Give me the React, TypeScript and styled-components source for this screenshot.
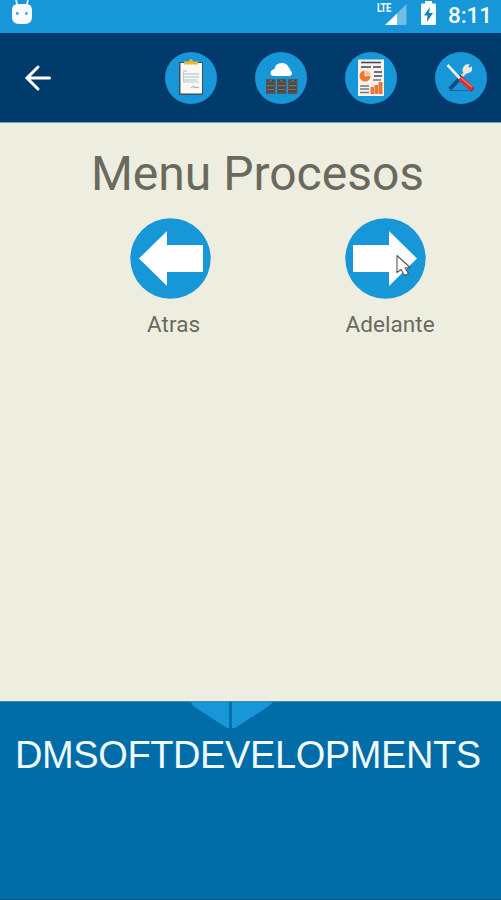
import React from "react";
import styled, { createGlobalStyle } from "styled-components";

const GlobalStyle = createGlobalStyle`
  * { box-sizing: border-box; }
  body { margin: 0; background: #eeeee0; }
  svg { display: block; flex: none; }
`;

const Screen = styled.div`
  display: flex;
  flex-direction: column;
  width: 501px;
  height: 900px;
  overflow: hidden;
  background: #eeeee0;
  font-family: Roboto, sans-serif;
`;

const StatusBar = styled.header`
  display: flex;
  justify-content: space-between;
  height: 33px;
  padding: 0 9px 0 11px;
  background: #1797d8;
`;

const StatusGroup = styled.div`
  display: flex;
  align-items: flex-start;
`;

const BatterySlot = styled.div`
  margin-left: 13px;
`;

const Clock = styled.time`
  margin-left: 11px;
  padding-top: 1px;
  color: #f3fbff;
  font-size: 22.5px;
  font-weight: 500;
  line-height: 28px;
  letter-spacing: -0.1px;
`;

const AppBar = styled.nav`
  display: flex;
  align-items: center;
  justify-content: space-between;
  height: 90px;
  padding: 0 14px 0 24px;
  background: #003b6b;
  border-bottom: 1px solid #8498a2;
`;

const Actions = styled.div`
  display: flex;
  gap: 38px;
`;

const IconButton = styled.button`
  display: flex;
  padding: 0;
  border: 0;
  background: none;
`;

const ActionButton = styled(IconButton)`
  width: 52px;
  height: 52px;
  border-radius: 50%;
  background: #1797d8;
`;

const Content = styled.main`
  flex: 1;
`;

const Title = styled.h1`
  margin: 23px 0 0 14px;
  color: #696a5d;
  font-size: 48px;
  font-weight: 400;
  line-height: 56px;
  text-align: center;
  white-space: nowrap;
`;

const Options = styled.div`
  display: flex;
  gap: 125px;
  margin: 16px 0 0 130px;
`;

const Option = styled.button`
  display: flex;
  flex-direction: column;
  align-items: flex-start;
  width: 90px;
  padding: 0;
  border: 0;
  background: none;
  font-family: inherit;
`;

const OptionLabel = styled.span<{ $indent: number }>`
  margin: 11px 0 0 ${(p) => p.$indent}px;
  color: #696a5d;
  font-size: 22.5px;
  line-height: 28px;
  letter-spacing: 0.05px;
  white-space: nowrap;
`;

const Footer = styled.footer`
  display: flex;
  flex-direction: column;
  height: 199px;
  background: #006ca8;
  border-top: 1px solid #3a8ab4;
  border-bottom: 1px solid #07568a;
`;

const Emblem = styled.svg`
  margin-left: 190px;
`;

const Brand = styled.div`
  margin: 4px 0 0 15px;
  color: #f1faff;
  font-family: "Liberation Sans", Arial, sans-serif;
  font-size: 38px;
  line-height: 44px;
  letter-spacing: -0.4px;
  white-space: nowrap;
`;

const Mascot = () => (
  <svg width="22" height="26" viewBox="0 0 22 26">
    <path d="M5 0 6.5 6M17 0 15.5 6" stroke="#d9f0fb" strokeWidth="1.8" />
    <path d="M1 10Q1 4 7 4H15Q21 4 21 10V17Q21 24 14 24H8Q1 24 1 17Z" fill="#f6fcff" />
    <circle cx="6.3" cy="13.5" r="1.4" fill="#48a2cd" />
    <circle cx="15.4" cy="13.5" r="1.4" fill="#48a2cd" />
  </svg>
);

const LteLabel = styled.span`
  width: 18px;
  margin: 1px -10px 0 0;
  color: #f3fbff;
  font-size: 13px;
  font-weight: 700;
  line-height: 14px;
  letter-spacing: -0.6px;
  transform: scaleX(0.72);
  transform-origin: left;
`;

const Signal = () => (
  <svg width="22" height="28" viewBox="0 0 22 28">
    <path d="M0 25 12.500 13V25Z" fill="#fff" />
    <path d="M12.500 13 21.500 4V25H12.500Z" fill="#70bee7" />
  </svg>
);

const Battery = () => (
  <svg width="17" height="28" viewBox="0 0 17 28">
    <path d="M5 1h7v2.500h3q1 0 1 1V24q0 1-1 1H2q-1 0-1-1V4.500q0-1 1-1h3Z" fill="#f7fdff" />
    <path d="M10 7 4 15.500h3.600L6.800 22 13 13H9Z" fill="#167fb7" />
  </svg>
);

const BackArrow = () => (
  <svg width="28" height="28" viewBox="0 0 28 28" fill="none" stroke="#fff" strokeWidth="3" strokeLinecap="round">
    <path d="M25.500 14H3.500M14 3 3 14 14 25" />
  </svg>
);

const Clipboard = () => (
  <svg width="52" height="52" viewBox="0 0 52 52">
    <path d="M14 10H38V43H14Z" fill="#3d4f60" />
    <path d="M15.500 11H37V41.500H15.500Z" fill="#f8f8f4" />
    <path d="M19 12.500v-3h5q0-2.500 2-2.500t2 2.500h5v3Z" fill="#edb72a" />
    <path d="M18 19h4M18 22h16M18 25h16M18 28h14" stroke="#a9c4bd" strokeWidth="1" />
    <path d="M18.500 20v9M18 30h16" stroke="#b9cbc7" />
    <path d="m26 36 3-2 1 2 2-1 2 1" fill="none" stroke="#9ca5ab" />
  </svg>
);

const CloudServers = () => (
  <svg width="52" height="52" viewBox="0 0 52 52">
    <path d="M19 24q-3.500 0-3.500-3t4-4q1-6 7-6t7.500 5q2 1 1.500 3 2 .5 1.500 3-.5 2-3 2Z" fill="#fff" />
    {[11, 22, 33].map((x) => (
      <g key={x} transform={`translate(${x} 27)`}>
        <path d="M0 0h9.500v15H0Z" fill="#59534e" />
        <path d="M1 1.500h7M1 5h7M1 9h7M1 12h7" stroke="#344556" strokeWidth="1" />
        <path d="M3 1.500h3M1 6.500h7M1 10.500h7" stroke="#9e725b" strokeWidth=".8" />
      </g>
    ))}
  </svg>
);

const Report = () => (
  <svg width="52" height="52" viewBox="0 0 52 52">
    <path d="M13 7.500H39V44H13Z" fill="#f6f3ed" />
    <path d="M16 10.500h20M28 15h8M16 15h10M29 20h8M29 24h8" stroke="#424654" strokeWidth="1.700" />
    <circle cx="20" cy="24" r="5.500" fill="#ee792b" />
    <path d="M20 24v-6q5 0 6 5Z" fill="#fac38d" stroke="#fff" strokeWidth=".7" />
    <path d="M15 34h9M15 37h9M15 40.500h9M28 28h8" stroke="#747782" strokeWidth="1.300" />
    <path d="M25.500 35h3.500v7h-3.500Zm4-2h3.500v9h-3.500Zm4-3h4v12h-4Z" fill="#ed7430" />
  </svg>
);

const Tools = () => (
  <svg width="52" height="52" viewBox="0 0 52 52">
    <path d="M15 37 27 24" stroke="#164984" strokeWidth="4" />
    <path d="m27 24 5-5" stroke="#e6dccd" strokeWidth="3" />
    <path d="m34.500 12-1.200 4 3.500-1.500q1.500 5-3 6.500-4 1-6-1-1-5 3-7.500Z" fill="#eee9df" />
    <path d="m12.500 13 13 14" stroke="#e9f0f1" strokeWidth="2.600" />
    <path d="m25 26 12.500 11.500" stroke="#ce3636" strokeWidth="5.500" />
    <path d="m26 26 11 9" stroke="#f37c70" strokeWidth="1.200" />
    <path d="m35.500 39.500 3.500-3.500" stroke="#8b2b45" strokeWidth="1.500" />
    <path d="M14 38.500h20" stroke="#16699f" strokeWidth="1" />
  </svg>
);

const Cursor = () => (
  <path
    d="M52 37.500V54.500l4-3 3.500 6 4-2-3.500-5.500 5-.5Z"
    fill="#fff"
    stroke="#54545c"
    strokeWidth="1.100"
    strokeLinejoin="round"
  />
);

const Direction = ({ forward = false }: { forward?: boolean }) => (
  <svg width="81" height="81" viewBox="0 0 81 81">
    <circle cx="40.500" cy="40.500" r="40.200" fill="#1797d8" />
    <path
      d={forward ? "M8 27H44V13L72 40.500 44 68V54H8Z" : "M73 27H37V13L9 40.500 37 68V54H73Z"}
      fill="#fff"
    />
    {forward && <Cursor />}
  </svg>
);

const actions = [
  { name: "Registros", Icon: Clipboard },
  { name: "Servidores", Icon: CloudServers },
  { name: "Reportes", Icon: Report },
  { name: "Herramientas", Icon: Tools },
];

export default function App() {
  return (
    <Screen>
      <GlobalStyle />
      <StatusBar>
        <Mascot />
        <StatusGroup>
          <LteLabel>LTE</LteLabel>
          <Signal />
          <BatterySlot><Battery /></BatterySlot>
          <Clock>8:11</Clock>
        </StatusGroup>
      </StatusBar>
      <AppBar>
        <IconButton aria-label="Volver"><BackArrow /></IconButton>
        <Actions>
          {actions.map(({ name, Icon }) => (
            <ActionButton key={name} aria-label={name}><Icon /></ActionButton>
          ))}
        </Actions>
      </AppBar>
      <Content>
        <Title>Menu Procesos</Title>
        <Options>
          <Option><Direction /><OptionLabel $indent={17}>Atras</OptionLabel></Option>
          <Option><Direction forward /><OptionLabel $indent={0.5}>Adelante</OptionLabel></Option>
        </Options>
      </Content>
      <Footer>
        <Emblem width="84" height="27" viewBox="0 0 84 27">
          <path d="M1 0H39V26H37L3 4Z" fill="#1797d8" />
          <path d="M42 0H83L79 4 45 26H42Z" fill="#1797d8" />
        </Emblem>
        <Brand>DMSOFTDEVELOPMENTS</Brand>
      </Footer>
    </Screen>
  );
}
